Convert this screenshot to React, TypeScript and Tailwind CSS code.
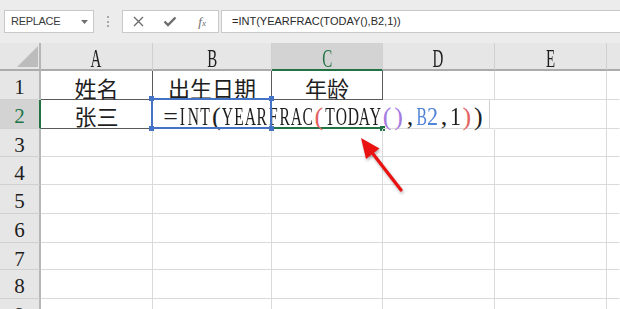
import React from "react";

const SERIF = "font-['Liberation_Serif','Times_New_Roman',serif]";
const CJK = "font-['Noto_Sans_CJK_SC','Noto_Sans',sans-serif]";
const UI = "font-['Liberation_Sans',Arial,sans-serif]";

type Tone = "k" | "r" | "p" | "b" | "g";
const toneClass: Record<Tone, string> = {
  k: "text-[#1e1e1e]",
  r: "text-[#e2625f]",
  p: "text-[#a67ae0]",
  b: "text-[#4f82d8]",
  g: "text-[#217346]",
};

const formula: [string, Tone][] = [
  ["=INT(YEARFRAC", "k"],
  ["(", "r"],
  ["TODAY", "k"],
  ["()", "p"],
  [",", "k"],
  ["B2", "b"],
  [",", "k"],
  ["1", "k"],
  [")", "r"],
  [")", "k"],
];

const columns = ["A", "B", "C", "D", "E"];
const rowHeights = ["h-[29px]", "h-[29px]", "h-[28px]", "h-[28px]", "h-[29px]", "h-[29px]", "h-[27px]", "h-[29px]", "h-[29px]"];

function Glyph({ ch, tone = "k", big = true }: { ch: string; tone?: Tone; big?: boolean }) {
  // half-width cells, like the SimSun latin glyphs in the sheet
  const squeeze = /[A-Z]/.test(ch) ? "scale-x-[0.6]" : /[0-9]/.test(ch) ? "scale-x-[0.85]" : "";
  const fs = big ? "text-[26px] leading-[26px]" : "text-[25px] leading-[25px]";
  return (
    <span className={`inline-flex shrink-0 w-[11.4px] justify-center ${fs}`}>
      <span className={`inline-block ${squeeze} ${toneClass[tone]}`}>{ch}</span>
    </span>
  );
}

function Toolbar() {
  return (
    <div className={`h-[43px] bg-[#ececec] flex items-start pt-[10px] pl-[4px] ${UI}`}>
      <div className="w-[90px] h-[23px] bg-white border border-[#c9c9c9] flex items-center justify-between pl-[6px] pr-[5px]">
        <span className="text-[11px] tracking-[-0.3px] text-[#3a3a3a]">REPLACE</span>
        <svg width="7" height="4" viewBox="0 0 7 4">
          <path d="M0 0h7L3.5 4z" fill="#707070" />
        </svg>
      </div>
      <div className="w-[28px] h-[23px] flex flex-col items-center justify-center gap-[2.5px]">
        <span className="w-[2px] h-[2px] bg-[#a8a8a8]" />
        <span className="w-[2px] h-[2px] bg-[#a8a8a8]" />
        <span className="w-[2px] h-[2px] bg-[#a8a8a8]" />
      </div>
      <div className="w-[97px] h-[23px] bg-white border border-[#c9c9c9] grid grid-cols-3 items-center justify-items-center">
        <svg width="11" height="11" viewBox="0 0 11 11">
          <path d="M1 1l9 9M10 1l-9 9" stroke="#6d6d6d" strokeWidth="1.4" />
        </svg>
        <svg width="14" height="11" viewBox="0 0 14 11">
          <path d="M1.5 5.5l3.5 3.5L12.5 1.5" stroke="#6d6d6d" strokeWidth="2.4" fill="none" />
        </svg>
        <span className={`${SERIF} italic text-[13px] text-[#6d6d6d] leading-none`}>
          f<span className="text-[9px]">x</span>
        </span>
      </div>
      <div className="ml-[2px] flex-1 h-[23px] bg-white border-y border-l border-[#c9c9c9] flex items-center pl-[10px]">
        <span className="text-[11px] text-[#2a2a2a]">=INT(YEARFRAC(TODAY(),B2,1))</span>
      </div>
    </div>
  );
}

function HeaderRow() {
  return (
    <>
      <div className="h-[28px] bg-[#e6e6e6] border-r-2 border-r-[#b6b6b6] border-b-2 border-b-[#ababab]">
        <svg width="39" height="26" viewBox="0 0 39 26">
          <path d="M17 24H38V3z" fill="#bcbcbc" />
        </svg>
      </div>
      {columns.map((c) => {
        const active = c === "C";
        return (
          <div
            key={c}
            className={`h-[28px] flex justify-center pt-[3px] border-r border-r-[#d0d0d0] border-b-2 ${SERIF} ${
              active ? "bg-[#d3d3d3] border-b-[#217346]" : "bg-[#e6e6e6] border-b-[#ababab]"
            }`}
          >
            <Glyph ch={c} big={false} tone={active ? "g" : "k"} />
          </div>
        );
      })}
      <div className="h-[28px] bg-[#e6e6e6] border-b-2 border-b-[#ababab]" />
    </>
  );
}

function RowHeader({ n, h }: { n: number; h: string }) {
  const active = n === 2;
  return (
    <div
      className={`${h} flex justify-center pt-[6px] border-b border-b-[#d0d0d0] border-r-2 ${SERIF} text-[21px] leading-[21px] ${
        active ? "bg-[#d3d3d3] border-r-[#217346] text-[#217346]" : "bg-[#e6e6e6] border-r-[#b6b6b6] text-[#1e1e1e]"
      }`}
    >
      {n}
    </div>
  );
}

function Cell({ h, r = "border-r-[#dadada]", b = "border-b-[#dadada]", className = "", children }: {
  h: string;
  r?: string;
  b?: string;
  className?: string;
  children?: React.ReactNode;
}) {
  return <div className={`${h} relative border-r border-b ${r} ${b} ${className}`}>{children}</div>;
}

function Handle({ pos, color }: { pos: string; color: string }) {
  return <span className={`absolute w-[5px] h-[5px] ${color} ${pos}`} />;
}

function Sheet() {
  const dark = "border-r-[#5a5a5a]";
  const darkB = "border-b-[#5a5a5a]";
  const cjk = `flex justify-center ${CJK} text-[22px] leading-[22px] text-[#1e1e1e]`;
  return (
    <div className="grid grid-cols-[41px_112px_119px_111px_112px_112px_1fr]">
      <HeaderRow />

      <RowHeader n={1} h={rowHeights[0]} />
      <Cell h={rowHeights[0]} r={dark} b={darkB} className={`${cjk} pt-[5px]`}>姓名</Cell>
      <Cell h={rowHeights[0]} r={dark} b={darkB} className={`${cjk} pt-[5px]`}>出生日期</Cell>
      <Cell h={rowHeights[0]} r={dark} b={darkB} className={`${cjk} pt-[5px]`}>年龄</Cell>
      <Cell h={rowHeights[0]} />
      <Cell h={rowHeights[0]} />
      <Cell h={rowHeights[0]} r="border-r-transparent" />

      <RowHeader n={2} h={rowHeights[1]} />
      <Cell h={rowHeights[1]} r={dark} b={darkB} className={`${cjk} pt-[4px]`}>张三</Cell>
      <Cell h={rowHeights[1]} r="border-r-transparent" className="z-10">
        <div className={`flex whitespace-nowrap pl-[12px] pt-[4px] ${SERIF}`}>
          {formula.flatMap(([s, tone], i) =>
            s.split("").map((ch, j) => <Glyph key={`${i}-${j}`} ch={ch} tone={tone} />)
          )}
        </div>
        <div className="absolute -left-[2px] -top-[2px] -right-[1px] -bottom-[1px] border-2 border-[#4472c4]" />
        <Handle color="bg-[#4472c4]" pos="-left-[4px] -top-[4px]" />
        <Handle color="bg-[#4472c4]" pos="-right-[3px] -top-[4px]" />
        <Handle color="bg-[#4472c4]" pos="-left-[4px] -bottom-[3px]" />
        <Handle color="bg-[#4472c4]" pos="-right-[3px] -bottom-[3px]" />
      </Cell>
      <Cell h={rowHeights[1]} r="border-r-transparent">
        <div className="absolute left-0 -right-[1px] -bottom-[1px] h-[2px] bg-[#217346]" />
        <Handle color="bg-[#217346]" pos="-right-[3px] -bottom-[3px]" />
      </Cell>
      <Cell h={rowHeights[1]} r="border-r-transparent">
        <div className="absolute right-[4px] top-0 bottom-0 w-px bg-[#cfcfcf]" />
      </Cell>
      <Cell h={rowHeights[1]} />
      <Cell h={rowHeights[1]} r="border-r-transparent" />

      {rowHeights.slice(2).map((h, i) => (
        <React.Fragment key={i}>
          <RowHeader n={i + 3} h={h} />
          {columns.map((c) => (
            <Cell key={c} h={h} />
          ))}
          <Cell h={h} r="border-r-transparent" />
        </React.Fragment>
      ))}
    </div>
  );
}

function Arrow() {
  return (
    <svg className="absolute left-0 top-0 pointer-events-none" width="620" height="309" viewBox="0 0 620 309">
      <g style={{ filter: "drop-shadow(1px 2px 1.5px rgba(0,0,0,0.3))" }}>
        <line x1="401" y1="190" x2="370" y2="150" stroke="#ea1111" strokeWidth="3.2" strokeLinecap="round" />
        <path d="M361 138L379.5 148.5L366 159z" fill="#ea1111" />
      </g>
    </svg>
  );
}

export default function App() {
  return (
    <div className="relative w-[620px] h-[309px] overflow-hidden bg-white">
      <Toolbar />
      <Sheet />
      <Arrow />
    </div>
  );
}
